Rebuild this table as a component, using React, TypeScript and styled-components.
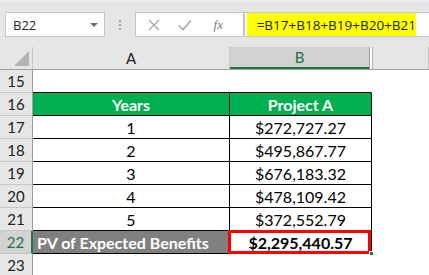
import React from "react";
import styled, { createGlobalStyle } from "styled-components";

const Global = createGlobalStyle`
  html, body { margin: 0; padding: 0; background: #ffffff; }
  body { font-family: Lato, "Liberation Sans", sans-serif; overflow: hidden; }
  * { box-sizing: border-box; }
`;

const Page = styled.div`
  width: 429px;
  height: 275px;
  overflow: hidden;
  background: #ffffff;
`;

const Toolbar = styled.div`
  height: 47px;
  background: #e6e6e6;
  border-top: 2px solid #ececec;
  display: flex;
  align-items: flex-start;
  padding: 10px 0 0 5px;
`;

const NameBox = styled.div`
  width: 102px;
  height: 25px;
  background: #ffffff;
  border: 1px solid #c6c6c6;
  display: flex;
  align-items: center;
  justify-content: space-between;
  padding: 0 6px 0 7px;
  font-family: "Open Sans", sans-serif;
  font-size: 13px;
  color: #262626;
`;

const Caret = styled.span`
  width: 0;
  height: 0;
  border-left: 4px solid transparent;
  border-right: 4px solid transparent;
  border-top: 4px solid #6b6b6b;
`;

const Dots = styled.div`
  width: 30px;
  height: 25px;
  display: flex;
  flex-direction: column;
  align-items: center;
  justify-content: center;
  gap: 2px;
  & > span { width: 2px; height: 2px; background: #a8a8a8; display: block; }
`;

const FxBox = styled.div`
  width: 111px;
  height: 25px;
  background: #ffffff;
  border: 1px solid #c6c6c6;
  display: flex;
  align-items: center;
  padding-left: 12px;
  gap: 18px;
`;

const Fx = styled.span`
  font-family: "Liberation Serif", serif;
  font-style: italic;
  font-size: 13px;
  color: #7a7a7a;
  margin-left: 4px;
`;

const Formula = styled.div`
  flex: 1;
  height: 25px;
  background: #ffffff;
  border: 1px solid #c6c6c6;
  border-right: none;
  padding: 0 13px 0 2px;
  display: flex;
`;

const Highlight = styled.div`
  flex: 1;
  background: #ffff00;
  display: flex;
  align-items: center;
  padding-left: 10px;
  font-family: "Open Sans", sans-serif;
  font-size: 13.5px;
  color: #262626;
`;

const HeaderRow = styled.div`
  height: 23px;
  display: grid;
  grid-template-columns: 33px 197px 140px 3px 1fr;
  background: #e6e6e6;
  border-bottom: 1px solid #9f9f9f;
`;

const Corner = styled.div`
  border-right: 1px solid #c6c6c6;
  position: relative;
  overflow: hidden;
  &::after {
    content: "";
    position: absolute;
    right: 3px;
    bottom: 3px;
    width: 0;
    height: 0;
    border-left: 15px solid transparent;
    border-bottom: 15px solid #b4b4b4;
  }
`;

const ColHead = styled.div<{ $active?: boolean }>`
  display: flex;
  align-items: center;
  justify-content: center;
  font-family: Lato, sans-serif;
  font-size: 15px;
  color: ${(p) => (p.$active ? "#1e6e44" : "#222222")};
  background: ${(p) => (p.$active ? "#d2d2d2" : "#e6e6e6")};
  border-right: 1px solid ${(p) => (p.$active ? "#9f9f9f" : "#c6c6c6")};
  border-bottom: ${(p) => (p.$active ? "2px solid #217346" : "none")};
`;

const Splitter = styled.div`
  background: #ffffff;
  border-right: 1px solid #b0b0b0;
`;

const Row = styled.div`
  height: 23px;
  display: grid;
  grid-template-columns: 33px 197px 142px 1fr;
`;

const RowHead = styled.div<{ $active?: boolean }>`
  background: ${(p) => (p.$active ? "#d2d2d2" : "#e6e6e6")};
  color: ${(p) => (p.$active ? "#217346" : "#222222")};
  border-bottom: 1px solid #c6c6c6;
  border-right: ${(p) => (p.$active ? "2px solid #217346" : "1px solid #9f9f9f")};
  display: flex;
  align-items: center;
  justify-content: center;
  font-family: Lato, sans-serif;
  font-size: 15px;
`;

type Kind = "blank" | "head" | "body" | "label" | "total";

const Cell = styled.div<{ $kind: Kind; $top?: boolean }>`
  position: relative;
  z-index: ${(p) => (p.$kind === "total" ? 2 : "auto")};
  display: flex;
  align-items: center;
  font-family: Lato, sans-serif;
  font-size: 16px;
  white-space: nowrap;
  justify-content: ${(p) => (p.$kind === "label" ? "flex-start" : "center")};
  padding-left: ${(p) => (p.$kind === "label" ? "4px" : "0")};
  font-weight: ${(p) => (p.$kind === "body" || p.$kind === "blank" ? 400 : 700)};
  color: ${(p) => (p.$kind === "head" || p.$kind === "label" ? "#ffffff" : "#000000")};
  background: ${(p) =>
    p.$kind === "head" ? "#00b050" : p.$kind === "label" ? "#808080" : "#ffffff"};
  border-right: 1px solid ${(p) => (p.$kind === "blank" ? "transparent" : "#000000")};
  border-bottom: 1px solid ${(p) => (p.$kind === "blank" && !p.$top ? "transparent" : "#000000")};
`;

const RedFrame = styled.span`
  position: absolute;
  left: -2px;
  top: -1px;
  right: 0;
  bottom: -1px;
  border: 3px solid #ff0000;
  pointer-events: none;
`;

const Handle = styled.span`
  position: absolute;
  right: -3px;
  bottom: -3px;
  width: 5px;
  height: 5px;
  background: #217346;
  border: 1px solid #ffffff;
`;

const data: [string, string][] = [
  ["1", "$272,727.27"],
  ["2", "$495,867.77"],
  ["3", "$676,183.32"],
  ["4", "$478,109.42"],
  ["5", "$372,552.79"],
];

const X = () => (
  <svg width="12" height="12" viewBox="0 0 12 12">
    <path d="M1 1 L11 11 M11 1 L1 11" stroke="#a6a6a6" strokeWidth="1.3" fill="none" />
  </svg>
);

const Check = () => (
  <svg width="14" height="12" viewBox="0 0 14 12">
    <path d="M1 6.5 L5 10.5 L13 1.5" stroke="#a6a6a6" strokeWidth="1.6" fill="none" />
  </svg>
);

export default function App() {
  return (
    <Page>
      <Global />
      <Toolbar>
        <NameBox>
          <span>B22</span>
          <Caret />
        </NameBox>
        <Dots>
          <span />
          <span />
          <span />
        </Dots>
        <FxBox>
          <X />
          <Check />
          <Fx>fx</Fx>
        </FxBox>
        <Formula>
          <Highlight>=B17+B18+B19+B20+B21</Highlight>
        </Formula>
      </Toolbar>
      <HeaderRow>
        <Corner />
        <ColHead>A</ColHead>
        <ColHead $active>B</ColHead>
        <Splitter />
        <ColHead />
      </HeaderRow>
      <Row>
        <RowHead>15</RowHead>
        <Cell $kind="blank" $top />
        <Cell $kind="blank" $top />
        <Cell $kind="blank" />
      </Row>
      <Row>
        <RowHead>16</RowHead>
        <Cell $kind="head">Years</Cell>
        <Cell $kind="head">Project A</Cell>
        <Cell $kind="blank" />
      </Row>
      {data.map(([y, v], i) => (
        <Row key={y}>
          <RowHead>{17 + i}</RowHead>
          <Cell $kind="body">{y}</Cell>
          <Cell $kind="body">{v}</Cell>
          <Cell $kind="blank" />
        </Row>
      ))}
      <Row>
        <RowHead $active>22</RowHead>
        <Cell $kind="label">PV of Expected Benefits</Cell>
        <Cell $kind="total">
          $2,295,440.57
          <RedFrame />
          <Handle />
        </Cell>
        <Cell $kind="blank" />
      </Row>
      <Row>
        <RowHead>23</RowHead>
        <Cell $kind="blank" />
        <Cell $kind="blank" />
        <Cell $kind="blank" />
      </Row>
    </Page>
  );
}
